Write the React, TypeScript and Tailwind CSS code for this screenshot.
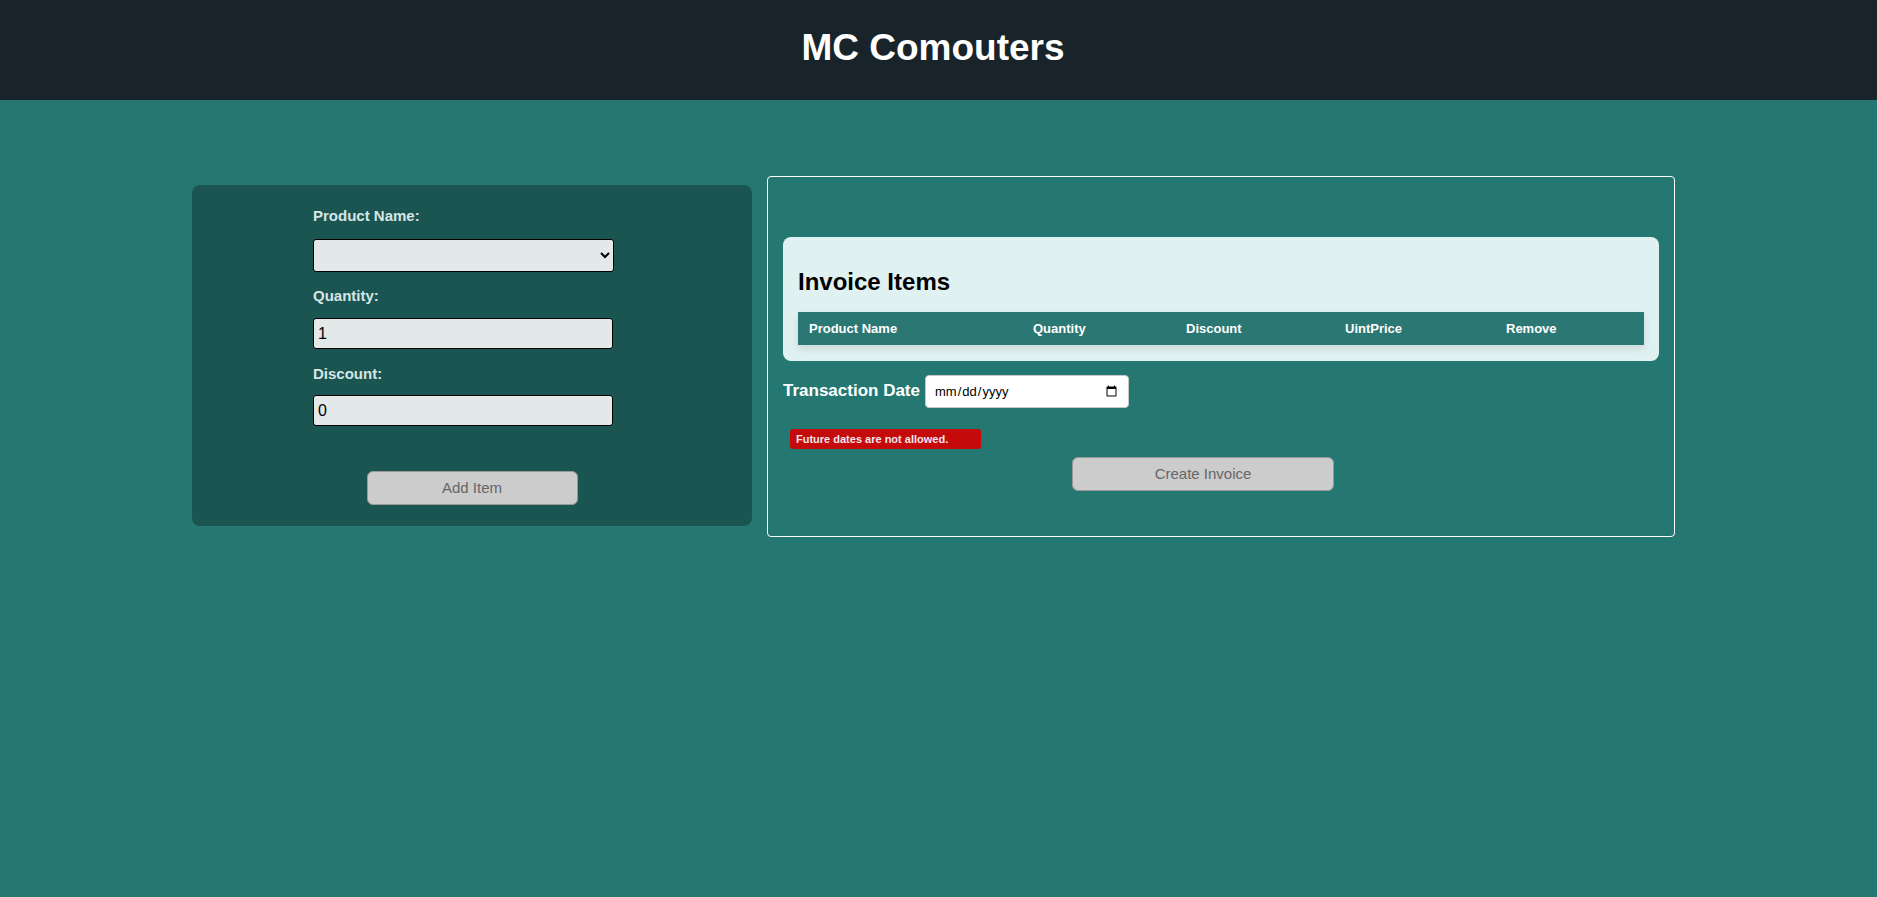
export default function App() {
  return (
    <div className="min-h-screen bg-[#257872] font-['Liberation_Sans',Arial,sans-serif]">
      {/* Header */}
      <header className="h-[100px] bg-[#18232a] flex items-center justify-center pr-[11px]">
        <h1 className="text-[37px] font-bold text-white leading-none -mt-[6px]">MC Comouters</h1>
      </header>

      <main className="flex items-start gap-[15px] pl-[192px] pt-[76px]">
        {/* Add item form */}
        <section className="mt-[9px] w-[560px] bg-[#1a5552] rounded-[8px] flex flex-col items-center pt-[22px] pb-[21px]">
          <div className="w-[318px] flex flex-col">
            <label className="text-[15px] leading-[17px] font-bold text-[#d6e6e4]">Product Name:</label>
            <select className="mt-[15px] w-[301px] h-[33px] bg-[#e3e8e8] border-[1.5px] border-black rounded-[3px] text-[16px] px-[2px]">
              <option value=""></option>
            </select>

            <label className="mt-[15px] text-[15px] leading-[17px] font-bold text-[#d6e6e4]">Quantity:</label>
            <input
              type="text"
              defaultValue="1"
              className="mt-[14px] w-[300px] h-[31px] bg-[#e3e8e8] border-[1.5px] border-black rounded-[3px] text-[16px] px-[4px] text-black"
            />

            <label className="mt-[16px] text-[15px] leading-[17px] font-bold text-[#d6e6e4]">Discount:</label>
            <input
              type="text"
              defaultValue="0"
              className="mt-[13px] w-[300px] h-[31px] bg-[#e3e8e8] border-[1.5px] border-black rounded-[3px] text-[16px] px-[4px] text-black"
            />
          </div>

          <button
            disabled
            className="mt-[45px] w-[211px] h-[34px] bg-[#cccccc] border border-[#999999] rounded-[6px] text-[15px] text-[#666666]"
          >
            Add Item
          </button>
        </section>

        {/* Invoice panel */}
        <section className="w-[908px] border border-white rounded-[4px] px-[15px] pt-[60px] pb-[45px]">
          <div className="bg-[#dff1f0] rounded-[8px] px-[15px] pt-[31px] pb-[16px]">
            <h2 className="text-[24px] leading-[28px] font-bold text-black mb-[16px]">Invoice Items</h2>
            <table className="w-full border-collapse shadow-[0_4px_8px_rgba(0,0,0,0.1)]">
              <thead>
                <tr className="bg-[#2b7773] h-[33px] text-white text-[13px] font-bold text-left">
                  <th className="w-[224px] pl-[11px] font-bold">Product Name</th>
                  <th className="w-[153px] pl-[11px] font-bold">Quantity</th>
                  <th className="w-[159px] pl-[11px] font-bold">Discount</th>
                  <th className="w-[161px] pl-[11px] font-bold">UintPrice</th>
                  <th className="pl-[11px] font-bold">Remove</th>
                </tr>
              </thead>
              <tbody></tbody>
            </table>
          </div>

          <div className="mt-[14px] flex items-start gap-[5px]">
            <label className="mt-[3px] text-[17px] font-bold text-white">Transaction Date</label>
            <input
              type="date"
              className="w-[204px] h-[33px] bg-white border border-[#c8c8c8] rounded-[4px] px-[8px] text-[13px] text-black"
            />
          </div>

          <div className="mt-[21px] ml-[7px] w-[191px] h-[20px] bg-[#c40a0a] rounded-[3px] px-[6px] flex items-center">
            <span className="text-[11px] font-bold text-[#f3e6ec]">Future dates are not allowed.</span>
          </div>

          <button
            disabled
            className="mt-[8px] ml-[289px] w-[262px] h-[34px] bg-[#cccccc] border border-[#999999] rounded-[6px] text-[15px] text-[#666666] block"
          >
            Create Invoice
          </button>
        </section>
      </main>
    </div>
  );
}
